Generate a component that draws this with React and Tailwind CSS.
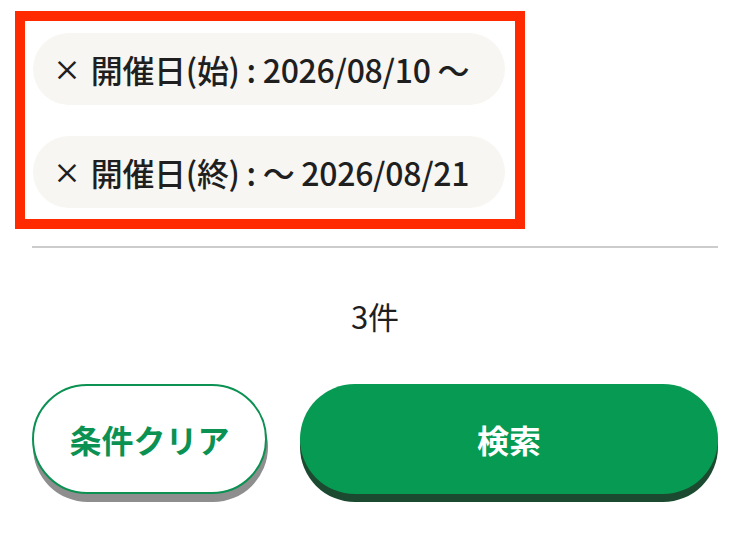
import React from "react";

const font = { fontFamily: '"Noto Sans CJK JP", "Noto Sans", sans-serif' };

function Chip({ label }) {
  return (
    <button className="flex items-center h-[72px] pl-5 pr-[36px] rounded-full bg-[#f7f6f2] text-[#1f1f1f] text-[32px] font-medium whitespace-nowrap tracking-[-0.3px]">
      <span className="mr-[10px] text-[28px]">×</span>
      <span>{label}</span>
    </button>
  );
}

export default function App() {
  return (
    <div className="min-h-screen bg-white" style={font}>
      <div className="pt-[11px] pl-[15px]">
        <div className="w-[510px] border-[10px] border-[#ff2a00] pl-2 pt-3 pb-[11px] flex flex-col items-start gap-[31px]">
          <Chip label="開催日(始) : 2026/08/10 〜" />
          <Chip label="開催日(終) : 〜 2026/08/21" />
        </div>
      </div>

      <div className="mx-8 mt-[17px] h-[2px] bg-[#cccccc]" />

      <div className="mt-[52px] text-center text-[31px] text-[#1f1f1f] leading-none">3件</div>

      <div className="mx-8 mt-[53px] flex gap-[33px]">
        <button className="w-[235px] h-[110px] rounded-full bg-white border-2 border-[#0b9152] shadow-[1px_8px_0_#8e8e8e] text-[#0b9152] text-[32px] font-bold">
          条件クリア
        </button>
        <button className="flex-1 h-[110px] rounded-full bg-[#069a52] shadow-[0_8px_0_#1c4a30] text-white text-[32px] font-bold">
          検索
        </button>
      </div>
    </div>
  );
}
